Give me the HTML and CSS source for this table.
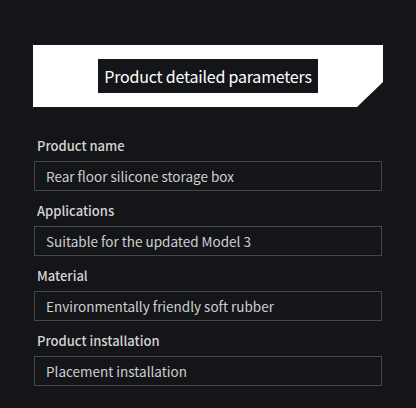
FILE: index.html
```html
<!DOCTYPE html>
<html>
<head>
<meta charset="utf-8">
<link rel="stylesheet" href="styles.css">
</head>
<body>
<div class="page">
  <div class="banner">
    <h1 class="title">Product detailed parameters</h1>
  </div>
  <div class="params">
    <div class="param">
      <div class="label">Product name</div>
      <div class="value">Rear floor silicone storage box</div>
    </div>
    <div class="param">
      <div class="label">Applications</div>
      <div class="value">Suitable for the updated Model 3</div>
    </div>
    <div class="param">
      <div class="label">Material</div>
      <div class="value">Environmentally friendly soft rubber</div>
    </div>
    <div class="param">
      <div class="label">Product installation</div>
      <div class="value">Placement installation</div>
    </div>
  </div>
</div>
</body>
</html>
```
FILE: styles.css
```css
html, body {
  margin: 0;
  padding: 0;
  background: #141518;
}
body {
  width: 416px;
  height: 408px;
  overflow: hidden;
  font-family: "Noto Sans CJK SC", "Noto Sans", sans-serif;
}
.page {
  padding: 45px 0 0 33px;
}
.banner {
  width: 350px;
  height: 62px;
  background: #ffffff;
  clip-path: polygon(0 0, 100% 0, 100% 37px, 324px 100%, 0 100%);
  display: flex;
  align-items: center;
  justify-content: center;
}
.title {
  margin: 0;
  background: #141518;
  color: #ffffff;
  font-size: 16px;
  font-weight: 400;
  line-height: 34px;
  height: 34px;
  padding: 0 6px;
  letter-spacing: -0.2px;
}
.params {
  margin-top: 30px;
  padding-left: 1px;
  display: flex;
  flex-direction: column;
  gap: 11px;
}
.label {
  color: #d4d4d4;
  font-size: 13px;
  font-weight: 500;
  line-height: 18px;
  margin-bottom: 6px;
  padding-left: 3px;
}
.value {
  width: 335px;
  height: 28px;
  border: 1px solid #45464a;
  color: #cfcfcf;
  font-size: 13.5px;
  line-height: 28px;
  padding-left: 11px;
  box-sizing: content-box;
}
```
